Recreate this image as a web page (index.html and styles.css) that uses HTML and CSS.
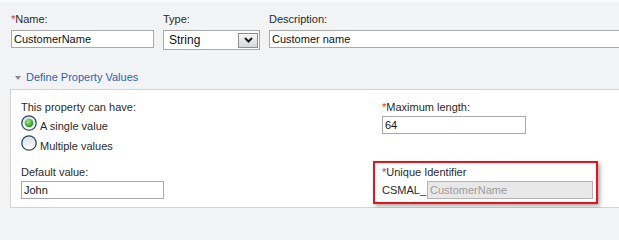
FILE: index.html
```html
<!DOCTYPE html>
<html>
<head>
<meta charset="utf-8">
<link rel="stylesheet" href="styles.css">
</head>
<body>
<div class="page">
  <div class="fields">
    <div class="field">
      <div class="label"><span class="req">*</span>Name:</div>
      <div class="input w-name">CustomerName</div>
    </div>
    <div class="field">
      <div class="label">Type:</div>
      <div class="select">
        <span class="select-text">String</span>
        <span class="select-btn"><svg width="9" height="6" viewBox="0 0 9 6"><path d="M1 1 L4.5 4.5 L8 1" fill="none" stroke="#1e1e1e" stroke-width="2"/></svg></span>
      </div>
    </div>
    <div class="field field-grow">
      <div class="label">Description:</div>
      <div class="input w-desc">Customer name</div>
    </div>
  </div>

  <div class="section-head"><span class="tri"></span>Define Property Values</div>

  <div class="panel">
    <div class="cell">
      <div class="label label-tight">This property can have:</div>
      <div class="radio-row">
        <svg class="radio" width="16" height="16" viewBox="0 0 16 16">
          <defs>
            <linearGradient id="rw1" x1="0" y1="0" x2="0" y2="1"><stop offset="0" stop-color="#d9dfe6"/><stop offset="1" stop-color="#ffffff"/></linearGradient>
            <radialGradient id="rg1" cx="40%" cy="35%" r="65%"><stop offset="0" stop-color="#a6ea7f"/><stop offset="1" stop-color="#1c961c"/></radialGradient>
          </defs>
          <circle cx="8" cy="8" r="7.2" fill="url(#rw1)" stroke="#2c4966" stroke-width="1.3"/>
          <circle cx="8" cy="8" r="4.3" fill="url(#rg1)"/>
        </svg>
        <span class="radio-label">A single value</span>
      </div>
      <div class="radio-row">
        <svg class="radio" width="16" height="16" viewBox="0 0 16 16">
          <defs>
            <linearGradient id="rw2" x1="0" y1="0" x2="0" y2="1"><stop offset="0" stop-color="#d9dfe6"/><stop offset="1" stop-color="#ffffff"/></linearGradient>
          </defs>
          <circle cx="8" cy="8" r="7.2" fill="url(#rw2)" stroke="#2c4966" stroke-width="1.3"/>
        </svg>
        <span class="radio-label">Multiple values</span>
      </div>
    </div>
    <div class="cell right-a">
      <div class="label"><span class="req">*</span>Maximum length:</div>
      <div class="input w-max">64</div>
    </div>
    <div class="cell left-b">
      <div class="label">Default value:</div>
      <div class="input w-def">John</div>
    </div>
    <div class="cell highlight">
      <div class="label"><span class="req">*</span>Unique Identifier</div>
      <div class="prefix-row">
        <span class="prefix">CSMAL_</span>
        <div class="input disabled w-uid">CustomerName</div>
      </div>
    </div>
  </div>
</div>
</body>
</html>
```

FILE: styles.css
```css
html, body {
  margin: 0;
  padding: 0;
  background: #f2f3f4;
  overflow: hidden;
}

.page {
  border-top: 2px solid #fbfbfb;
  font-family: "Liberation Sans", Arial, sans-serif;
  font-size: 11px;
  color: #2a2a2a;
  overflow: hidden;
}

.label {
  line-height: 14px;
  height: 14px;
  white-space: nowrap;
}

.req {
  color: #e2341d;
}

.fields {
  display: flex;
  gap: 9px;
  padding: 10px 0 0 11px;
}

.field-grow {
  flex: 1;
  min-width: 0;
}

.field .label {
  margin-bottom: 4px;
}

.input {
  box-sizing: border-box;
  height: 18px;
  border: 1px solid #a9a9a9;
  background: #fff;
  padding: 0 2px;
  line-height: 16px;
  color: #111;
  white-space: nowrap;
  overflow: hidden;
}

.w-name { width: 143px; }
.w-desc { width: 100%; border-right: none; }
.w-max { width: 144px; }
.w-def { width: 143px; }
.w-uid { width: 166px; }

.input.disabled {
  background: #e8e8e8;
  border-color: #b3b3b3;
  color: #9c9c9c;
}

.select {
  box-sizing: border-box;
  width: 97px;
  height: 20px;
  border: 1px solid #a9a9a9;
  background: #fff;
  display: flex;
  align-items: center;
  justify-content: space-between;
  padding: 0 1px 0 5px;
  color: #111;
  font-size: 12px;
}

.select-btn {
  box-sizing: border-box;
  width: 20px;
  height: 15px;
  border: 1px solid #8e8e8e;
  background: linear-gradient(#f6f6f6, #d6d8da);
  display: flex;
  align-items: center;
  justify-content: center;
}

.section-head {
  margin-top: 20px;
  padding-left: 15px;
  line-height: 14px;
  color: #2a64b6;
  display: flex;
  align-items: center;
}

.tri {
  width: 0;
  height: 0;
  border-left: 3.5px solid transparent;
  border-right: 3.5px solid transparent;
  border-top: 4px solid #8a8a8a;
  margin-right: 5px;
  margin-top: 1px;
}

.panel {
  margin: 5px 0 0 10px;
  border: 1px solid #d2d2d2;
  border-right: none;
  background: #fff;
  padding: 10px 0 3px 10px;
  display: grid;
  grid-template-columns: 352px 225px;
  row-gap: 7px;
}

.cell .label {
  margin-bottom: 2px;
}

.cell .label-tight {
  margin-bottom: 0;
}

.radio-row {
  display: flex;
  align-items: flex-start;
  height: 20px;
}

.radio {
  margin-top: 1px;
  margin-right: 3px;
  flex: none;
}

.radio-label {
  padding-top: 5px;
  line-height: 14px;
}

.right-a {
  padding-left: 9px;
}

.left-b {
  padding-top: 4px;
}

.highlight {
  box-sizing: border-box;
  width: 225px;
  border: 2px solid #e8141b;
  padding: 2px 3px 3px 7px;
  box-shadow: 2px 2px 4px rgba(0, 0, 0, 0.35);
}

.prefix-row {
  display: flex;
  align-items: center;
  gap: 1px;
}

.prefix {
  line-height: 18px;
}
```
